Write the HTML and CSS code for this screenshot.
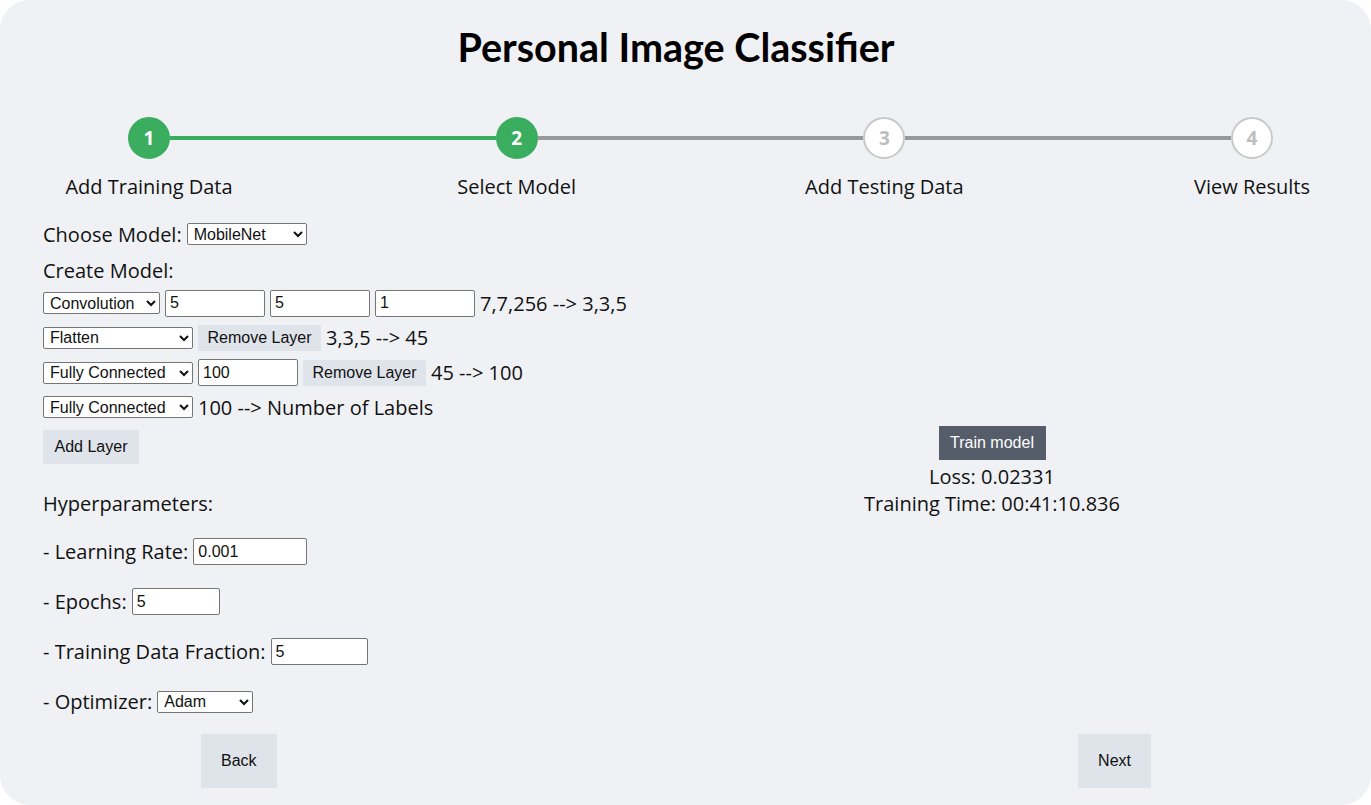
FILE: index.html
```html
<!DOCTYPE html>
<html lang="en">
<head>
    <meta charset="UTF-8">
    <meta name="viewport" content="width=device-width, initial-scale=1.0">
    <title>Personal Image Classifier</title>
    <link rel="stylesheet" href="styles.css">
</head>
<body>
<div class="card">
    <h1 class="title">Personal Image Classifier</h1>

    <div class="stepper">
        <div class="step done">
            <div class="circle">1</div>
            <div class="step-label">Add Training Data</div>
        </div>
        <div class="bar done"></div>
        <div class="step done">
            <div class="circle">2</div>
            <div class="step-label">Select Model</div>
        </div>
        <div class="bar"></div>
        <div class="step">
            <div class="circle">3</div>
            <div class="step-label">Add Testing Data</div>
        </div>
        <div class="bar"></div>
        <div class="step">
            <div class="circle">4</div>
            <div class="step-label">View Results</div>
        </div>
    </div>

    <div class="main">
        <div class="left">
            <div class="row choose-row">
                <span>Choose Model:</span>
                <select class="sel sel-model">
                    <option>MobileNet</option>
                </select>
            </div>
            <div class="row create-row">Create Model:</div>

            <div class="row layer-row">
                <select class="sel sel-conv"><option>Convolution</option></select>
                <input class="num" type="text" value="5">
                <input class="num" type="text" value="5">
                <input class="num" type="text" value="1">
                <span>7,7,256 --&gt; 3,3,5</span>
            </div>
            <div class="row layer-row">
                <select class="sel sel-layer"><option>Flatten</option></select>
                <button class="btn btn-remove">Remove Layer</button>
                <span>3,3,5 --&gt; 45</span>
            </div>
            <div class="row layer-row">
                <select class="sel sel-layer"><option>Fully Connected</option></select>
                <input class="num" type="text" value="100">
                <button class="btn btn-remove">Remove Layer</button>
                <span>45 --&gt; 100</span>
            </div>
            <div class="row layer-row">
                <select class="sel sel-layer"><option>Fully Connected</option></select>
                <span>100 --&gt; Number of Labels</span>
            </div>

            <button class="btn btn-add">Add Layer</button>

            <div class="row hyper-title">Hyperparameters:</div>
            <div class="hyper">
                <div class="row hyper-row">
                    <span>- Learning Rate:</span>
                    <input class="num lr" type="text" value="0.001">
                </div>
                <div class="row hyper-row">
                    <span>- Epochs:</span>
                    <input class="num epochs" type="text" value="5">
                </div>
                <div class="row hyper-row">
                    <span>- Training Data Fraction:</span>
                    <input class="num fraction" type="text" value="5">
                </div>
                <div class="row hyper-row">
                    <span>- Optimizer:</span>
                    <select class="sel sel-opt"><option>Adam</option></select>
                </div>
            </div>
        </div>

        <div class="right">
            <button class="btn btn-train">Train model</button>
            <div class="stat">Loss: 0.02331</div>
            <div class="stat">Training Time: 00:41:10.836</div>
        </div>
    </div>

    <div class="nav">
        <button class="btn btn-nav">Back</button>
        <button class="btn btn-nav">Next</button>
    </div>
</div>
</body>
</html>
```

FILE: styles.css
```css
body {
    margin: 0;
    background: #ffffff;
    font-family: "Open Sans", sans-serif;
    font-size: 20px;
    color: #111;
}
.card {
    height: 805px;
    background: #f0f1f5;
    border-radius: 30px;
    padding-top: 23px;
    box-sizing: border-box;
    overflow: hidden;
}
.title {
    margin: 0;
    padding-right: 19px;
    text-align: center;
    font-family: Lato, sans-serif;
    font-weight: 700;
    font-size: 39.5px;
    line-height: 48px;
    color: #000;
}

/* stepper */
.stepper {
    display: flex;
    margin-top: 46px;
    padding: 0 98px 0 128px;
}
.step {
    width: 42px;
    display: flex;
    flex-direction: column;
    align-items: center;
}
.circle {
    width: 42px;
    height: 42px;
    box-sizing: border-box;
    border-radius: 50%;
    border: 2px solid #c9c9c9;
    background: #fff;
    color: #bdbdbd;
    font-weight: 700;
    font-size: 19px;
    display: flex;
    align-items: center;
    justify-content: center;
}
.step.done .circle {
    background: #3aad5e;
    border-color: #3aad5e;
    color: #fff;
}
.step-label {
    white-space: nowrap;
    margin-top: 15px;
    line-height: 26px;
}
.bar {
    flex: 1;
    height: 4px;
    margin-top: 19px;
    background: #999;
}
.bar.done {
    background: #3aad5e;
}

/* main */
.main {
    display: flex;
    align-items: center;
    margin-top: 16px;
}
.left {
    width: 656px;
    padding-left: 43px;
    box-sizing: border-box;
}
.right {
    flex: 1;
    margin-right: 43px;
    display: flex;
    flex-direction: column;
    align-items: center;
}
.row {
    display: flex;
    align-items: center;
    gap: 5px;
    white-space: nowrap;
}
.row > * {
    flex-shrink: 0;
}
.choose-row {
    height: 36px;
}
.create-row {
    height: 32px;
    margin-top: 2px;
}
.layer-row {
    height: 34.67px;
}
.hyper-title {
    height: 30px;
    margin-top: 25px;
    margin-bottom: 8px;
}
.hyper-row {
    height: 50px;
}

.sel {
    font-family: "Liberation Sans", Arial, sans-serif;
    font-size: 16px;
    height: 22px;
    padding: 0 0 0 2px;
    border: 1px solid #767676;
    border-radius: 2px;
    background: #fff;
    color: #111;
}
.sel-model { width: 120px; }
.sel-conv { width: 117px; }
.sel-layer { width: 150px; }
.sel-opt { width: 96px; }

.num {
    font-family: "Liberation Sans", Arial, sans-serif;
    font-size: 16px;
    width: 100px;
    height: 27px;
    box-sizing: border-box;
    padding: 0 4px;
    border: 1px solid #767676;
    border-radius: 2px;
    background: #fff;
    color: #111;
}
.lr { width: 114px; }
.epochs { width: 88px; }
.fraction { width: 97px; }

.btn {
    font-family: "Liberation Sans", Arial, sans-serif;
    font-size: 16px;
    border: none;
    background: #dfe3ea;
    color: #111;
    padding: 0;
    cursor: pointer;
}
.btn-remove {
    width: 123px;
    height: 26px;
}
.btn-add {
    display: block;
    width: 96px;
    height: 34px;
    margin-top: 5px;
}
.btn-train {
    width: 107px;
    height: 34px;
    margin-bottom: 3px;
    background: #555d6b;
    color: #fff;
}
.stat {
    line-height: 27px;
}

.nav {
    display: flex;
    justify-content: space-between;
    padding: 0 220px 0 201px;
    margin-top: 7px;
}
.btn-nav {
    height: 54px;
    padding: 0 20px;
}
```
